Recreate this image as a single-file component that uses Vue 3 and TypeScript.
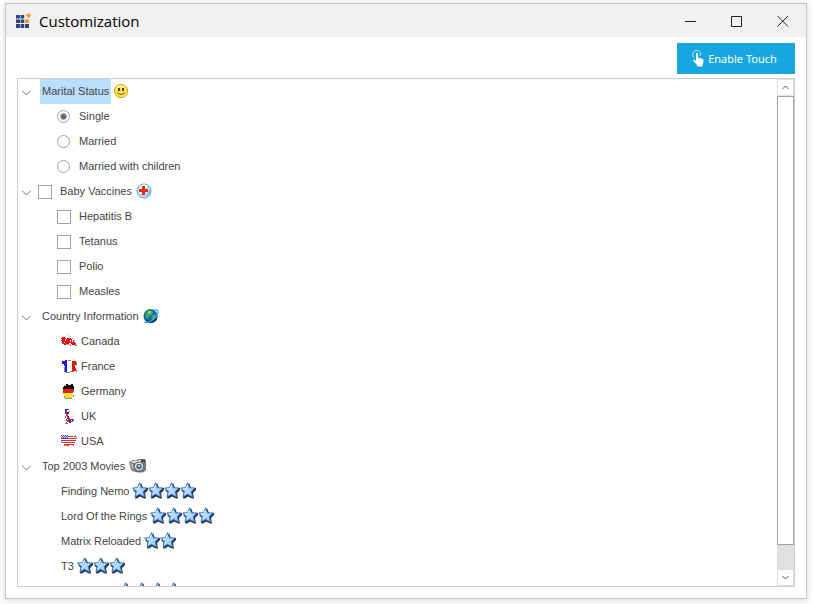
<script setup lang="ts">
import { ref } from 'vue'

interface Movie {
  id: number
  name: string
  stars: number
}

const maritalOptions: string[] = ['Single', 'Married', 'Married with children']
const vaccines: string[] = ['Hepatitis B', 'Tetanus', 'Polio', 'Measles']
const countries: string[] = ['Canada', 'France', 'Germany', 'UK', 'USA']
const movies: Movie[] = [
  { id: 1, name: 'Finding Nemo', stars: 4 },
  { id: 2, name: 'Lord Of the Rings', stars: 4 },
  { id: 3, name: 'Matrix Reloaded', stars: 2 },
  { id: 4, name: 'T3', stars: 3 },
  { id: 5, name: '', stars: 4 },
]

const marital = ref('Single')
const allVaccines = ref(false)
const chosenVaccines = ref<string[]>([])
const open = ref([true, true, true, true])

function toggle(index: number): void {
  open.value[index] = !open.value[index]
}
</script>

<template>
  <main class="window">
    <header class="titlebar">
      <svg class="logo" width="17" height="17" viewBox="0 0 17 17" aria-hidden="true">
        <path fill="#2f4381" d="M1 3h4v3.600H1zM5.600 3h3.600v3.600H5.600zM1 7.600h4v3.400H1zM5.600 7.600h3.600v3.400H5.600zM1 12h4v4H1zM5.600 12h3.600v4H5.600zM10 12h4v4h-4z" />
        <path fill="#f79a33" d="M10 7.600h4v3.400h-4zM13.500 .800l2.700 2.700-2.700 2.700-2.700-2.700z" />
      </svg>
      <h1>Customization</h1>
      <div class="controls">
        <button type="button" aria-label="Minimize">
          <svg width="12" height="12" viewBox="0 0 12 12"><path d="M0 6.500h11" /></svg>
        </button>
        <button type="button" aria-label="Maximize">
          <svg width="12" height="12" viewBox="0 0 12 12"><path d="M.5 1.500h10v10H.5z" /></svg>
        </button>
        <button type="button" aria-label="Close">
          <svg width="12" height="12" viewBox="0 0 12 12"><path d="M.5 1l10.500 10.500M11 1L.5 11.500" /></svg>
        </button>
      </div>
    </header>

    <div class="toolbar">
      <button type="button" class="touch">
        <svg width="12" height="17" viewBox="0 0 12 17" aria-hidden="true">
          <path fill="none" stroke="#b9e4f6" d="M2.200 7.500A4 4 0 1 1 8 6.500" />
          <path fill="#fff" d="M4 3.500Q5 2 6 3.500V8l1-.6 1 1 1-.5 1 1 1.300.2.200 3.400-1 2V16.500H5V15L1.200 10.800Q1 9.500 2.200 9.500L4 11z" />
        </svg>
        <span>Enable Touch</span>
      </button>
    </div>

    <section class="panel">
      <div class="tree">
        <div class="row root">
          <button type="button" class="expander" aria-label="Toggle Marital Status" @click="toggle(0)">
            <svg width="9" height="6" viewBox="0 0 9 6"><path d="M0 .5l4.500 4.500L9 .5" /></svg>
          </button>
          <span class="label selected">Marital Status</span>
          <svg class="icon" width="16" height="16" viewBox="0 0 16 16" aria-hidden="true">
            <circle cx="8" cy="8" r="6.600" fill="#ffe451" stroke="#dc9d19" />
            <path fill="#fff9b0" d="M3 6q1-4 5-4 3 0 4 2-5-1-9 2z" />
            <path fill="#543e12" d="M5 5h2v3H5zM9 5h2v3H9z" />
            <path fill="none" stroke="#79530d" d="M4 9.500q4 4 8 0" />
          </svg>
        </div>
        <template v-if="open[0]">
          <label v-for="option in maritalOptions" :key="option" class="row choice">
            <input v-model="marital" type="radio" name="marital" :value="option" />
            <span>{{ option }}</span>
          </label>
        </template>

        <div class="row root">
          <button type="button" class="expander" aria-label="Toggle Baby Vaccines" @click="toggle(1)">
            <svg width="9" height="6" viewBox="0 0 9 6"><path d="M0 .5l4.500 4.500L9 .5" /></svg>
          </button>
          <label class="group">
            <input v-model="allVaccines" type="checkbox" />
            <span>Baby Vaccines</span>
          </label>
          <svg class="icon" width="16" height="16" viewBox="0 0 16 16" aria-hidden="true">
            <circle cx="8" cy="8" r="7" fill="#b4e0fa" stroke="#5fa6d6" />
            <path fill="#fff" d="M3 6q1-4 5-4.500 3 0 4 2L4 11z" />
            <path fill="#3a7db7" opacity=".6" d="M14 6q1 6-5 8 4-3 5-8z" />
            <path fill="#f02a0c" d="M6 3h3v3h3v3H9v3H6V9H3V6h3z" />
          </svg>
        </div>
        <template v-if="open[1]">
          <label v-for="vaccine in vaccines" :key="vaccine" class="row choice">
            <input v-model="chosenVaccines" type="checkbox" :value="vaccine" />
            <span>{{ vaccine }}</span>
          </label>
        </template>

        <div class="row root">
          <button type="button" class="expander" aria-label="Toggle Country Information" @click="toggle(2)">
            <svg width="9" height="6" viewBox="0 0 9 6"><path d="M0 .5l4.500 4.500L9 .5" /></svg>
          </button>
          <span class="label">Country Information</span>
          <svg class="icon" width="16" height="16" viewBox="0 0 16 16" aria-hidden="true">
            <circle cx="7.500" cy="8" r="7" fill="#1766b4" />
            <path fill="#0b3673" d="M14 6q2 7-5 9-5 0-7-3 8 2 12-6z" />
            <path fill="#43b04a" d="M4 3l4-1 2 2-1 3-3 1-1 3-3-3zM10 7l2-1v3l-2 2-2-1z" />
            <path fill="#a5e28a" d="M5 4l2-1 1 1-2 2z" />
            <path fill="none" stroke="#3fb4ee" stroke-width="1.300" d="M1 13.500q1 2 6 0 6-3 8-9 .5-3.500-4-2.500" />
          </svg>
        </div>
        <template v-if="open[2]">
          <div v-for="country in countries" :key="country" class="row country">
            <svg width="16" height="16" viewBox="0 0 16 16" shape-rendering="crispEdges" aria-hidden="true">
              <g v-if="country === 'Canada'">
                <path fill="#b5b5b5" d="M4 3h1v1H4zM6 2h1v1H6zM8 1h1v1H8zM9 3h1v1H9zM10 6h1v2h-1zM11 5h1v1h-1zM13 7h1v1h-1zM4 11h6v1H4z" />
                <path fill="#f00a0a" d="M0 5h1V4h3v1h1v1h1V5h4v1h1v3h1V7h1v2h1v1h1v2h-4v-1h-1v-1H8v1H5v1H3v-1H1V8H0V7h1V6H0z" />
                <path fill="#fff" d="M4 6h1v2H4zM9 7h1v2H9zM3 9h1v1H3z" />
                <path fill="#666" d="M2 10h1v1H2zM9 12h1v1H9zM14 12h2v1h-2z" />
              </g>
              <g v-else-if="country === 'France'">
                <path fill="#fff" d="M5 2h6v13H5z" />
                <path fill="#1717f2" d="M1 3h3V2h2v12H4V8H3V6H1z" />
                <path fill="#ef1212" d="M11 3h4v4h-1v3h1v3h-2v1h-2z" />
                <path fill="#888" d="M15 4h1v4h-1zM5 14h4v1H5zM7 2h3v1H7zM9 13h3v1H9zM15 12h1v2h-1zM3 9h1v5H3z" />
              </g>
              <g v-else-if="country === 'Germany'">
                <path fill="#080808" d="M3 3h2V1h2v1h3V1h2v2h1v3H2V4h1z" />
                <path fill="#f01717" d="M2 6h11v2h-1v2H2z" />
                <path fill="#ffe72a" d="M2 10h9v2h1v2h-1v1H4v-2H3v-1H2z" />
                <path fill="#888" d="M3 2h1v1H3zM12 8h1v1h-1zM3 13h1v2H3zM4 15h7v1H4zM12 12h1v2h-1z" />
              </g>
              <g v-else-if="country === 'UK'">
                <path fill="#1a2cc7" d="M4 1h4v1H6v2h2v2H7v2h1v2h1v2h1v2H8v-2H7v-2H6V8H5V6H4z" />
                <path fill="#f02020" d="M5 2h1v4h1v3h1v2h3v1H8v2H6v1H5v-1h1v-2h1v-1H6V8H5zM10 13h2v1h-2z" />
                <path fill="#2442d0" d="M5 11h1v2H5zM11 11h1v2h-1zM8 14h2v1H8z" />
                <path fill="#777" d="M4 8h1v2H4zM8 3h1v1H8zM4 15h3v1H4zM12 11h1v2h-1z" />
              </g>
              <g v-else>
                <path fill="#fff" d="M0 2h15v8h-2v3H4v-1H1v-2H0z" />
                <path fill="#e92b2b" d="M7 3h5v1H7zM13 3h2v1h-2zM7 5h8v1H7zM0 7h15v1H0zM1 9h13v1H1zM3 11h10v1H3zM6 12h2v1H6zM12 12h1v1h-1z" />
                <path fill="#3a4db6" d="M0 2h7v4H0z" />
                <path fill="#dce5ff" d="M1 2h1v1H1zM3 2h1v1H3zM5 2h1v1H5zM0 3h1v1H0zM2 3h1v1H2zM4 3h1v1H4zM6 3h1v1H6zM1 4h1v1H1zM3 4h1v1H3zM5 4h1v1H5z" />
                <path fill="#999" d="M0 8h1v2H0zM14 2h1v1h-1zM15 4h1v2h-1zM3 12h3v1H3z" />
              </g>
            </svg>
            <span>{{ country }}</span>
          </div>
        </template>

        <div class="row root">
          <button type="button" class="expander" aria-label="Toggle Top 2003 Movies" @click="toggle(3)">
            <svg width="9" height="6" viewBox="0 0 9 6"><path d="M0 .5l4.500 4.500L9 .5" /></svg>
          </button>
          <span class="label">Top 2003 Movies</span>
          <svg class="icon" width="17" height="16" viewBox="0 0 17 16" aria-hidden="true">
            <path fill="#777" d="M0 4l4-2 3 .5L9 1h7l1 2v9l-3 2.500H9L3 13 1 9z" />
            <path fill="#dedede" d="M1 4l3-1h4l2-1h5l1 2L5 5z" />
            <path fill="#b4b4b4" d="M1 5l3 1 1 6-3-3z" />
            <path fill="#444" d="M12 2h4v2h-4z" />
            <circle cx="10" cy="8.500" r="4.500" fill="#eee" stroke="#555" />
            <circle cx="10" cy="8.500" r="2.700" fill="#45617a" />
            <path fill="#a9d4e4" d="M9 7h2v2H9z" />
          </svg>
        </div>
        <template v-if="open[3]">
          <div v-for="movie in movies" :key="movie.id" class="row movie">
            <span class="name">{{ movie.name }}</span>
            <span class="stars" role="img" :aria-label="movie.stars + ' stars'">
              <svg v-for="n in movie.stars" :key="n" width="16" height="17" viewBox="0 0 16 17">
                <path fill="#23364f" d="M9 1l2 5h5v2l-3 3 1 5.500h-2l-4-2-3 2H3l1-5.500-3-3 5-1z" />
                <path fill="#a5d1fb" stroke="#3c70bd" d="M7.500 .8l2 4.900 5.500.3-3.700 3.600 1.200 5.500-5-2.800L3 15l1.200-5.400L.6 6l5-.3z" />
                <path fill="none" stroke="#e4f4ff" d="M7.500 3L6.300 6.600 3 7M5 12l4-4.500" />
              </svg>
            </span>
          </div>
        </template>
      </div>

      <div class="scrollbar">
        <button type="button" aria-label="Scroll up">
          <svg width="7" height="5" viewBox="0 0 7 5"><path d="M.5 4l3-3 3 3" /></svg>
        </button>
        <div class="track"><div class="thumb"></div></div>
        <button type="button" aria-label="Scroll down">
          <svg width="7" height="5" viewBox="0 0 7 5"><path d="M.5 1l3 3 3-3" /></svg>
        </button>
      </div>
    </section>
  </main>
</template>

<style>
html,
body,
#app {
  height: 100%;
}

body {
  margin: 0;
  background: #fff;
}

#app {
  display: flex;
  box-sizing: border-box;
  padding: 3px 6px 5px 5px;
}
</style>

<style scoped>
* {
  box-sizing: border-box;
}

button {
  display: flex;
  align-items: center;
  justify-content: center;
  padding: 0;
  border: 0;
  background: none;
  font: inherit;
}

svg {
  flex: none;
  display: block;
}

.window {
  display: flex;
  flex: 1;
  flex-direction: column;
  min-width: 0;
  border: 1px solid #c6c6c6;
  background: #fff;
  box-shadow: 0 1px 6px 1px #e0e0e0;
  font: 400 11px/15px "Liberation Sans", Arial, sans-serif;
  color: #444;
}

.titlebar {
  display: flex;
  align-items: center;
  flex: none;
  height: 33px;
  padding: 0 0 0 9px;
  background: #f1f1f1;
}

.titlebar h1 {
  margin: 0 auto 0 7px;
  font: 400 15px/20px "Open Sans", "Noto Sans", sans-serif;
  color: #000;
}

.controls {
  display: flex;
}

.controls button {
  width: 46px;
  height: 33px;
}

.controls path {
  fill: none;
  stroke: #222;
}

.toolbar {
  display: flex;
  justify-content: flex-end;
  flex: none;
  padding: 6px 11px 4px;
}

.touch {
  gap: 4px;
  width: 118px;
  height: 31px;
  padding-right: 3px;
  background: #17a6df;
  color: #fff;
  font: 400 11px/16px "Noto Sans", "Open Sans", sans-serif;
}

.panel {
  display: flex;
  flex: 1;
  min-height: 0;
  margin: 0 11px 11px;
  border: 1px solid #cdcdcd;
}

.tree {
  flex: 1;
  min-width: 0;
  overflow: hidden;
}

.row {
  display: flex;
  align-items: center;
  height: 25px;
  white-space: nowrap;
}

.root {
  padding-left: 4px;
}

.expander {
  width: 9px;
  height: 25px;
  padding-top: 3px;
  margin-right: 9px;
}

.expander path {
  fill: none;
  stroke: #777;
}

.label {
  display: flex;
  align-items: center;
  height: 25px;
  padding: 0 2px;
}

.selected {
  background: #b9dffd;
}

.icon {
  margin: 0 0 2px 2px;
}

.group {
  display: flex;
  align-items: center;
  gap: 8px;
  margin: 0 2px 0 -2px;
}

.choice {
  gap: 8px;
  padding-left: 39px;
}

.country {
  gap: 4px;
  padding-left: 43px;
}

.country svg {
  margin-bottom: 2px;
}

.movie {
  gap: 3px;
  padding-left: 43px;
}

.name {
  flex: none;
}

.name:empty {
  width: 54px;
}

.stars {
  display: flex;
  margin-bottom: 2px;
}

input {
  appearance: none;
  flex: none;
  width: 14px;
  height: 14px;
  margin: 0;
  border: 1px solid #a3a3a3;
  background: #fff;
}

input[type="radio"] {
  width: 13px;
  height: 13px;
  margin-right: 1px;
  border-radius: 50%;
}

input[type="radio"]:checked {
  background: radial-gradient(circle, #666 0 2px, #fff 4px);
}

input[type="checkbox"]:checked {
  background: #666;
  box-shadow: inset 0 0 0 2px #fff;
}

.scrollbar {
  display: flex;
  flex-direction: column;
  flex: none;
  width: 17px;
  background: #e0e0e0;
}

.scrollbar button {
  flex: none;
  height: 17px;
  border: 1px solid #e0e0e0;
  background: #fff;
}

.scrollbar path {
  fill: none;
  stroke: #555;
}

.track {
  flex: 1;
}

.thumb {
  height: 95%;
  border: 1px solid #a3a3a3;
  background: #fff;
}
</style>
